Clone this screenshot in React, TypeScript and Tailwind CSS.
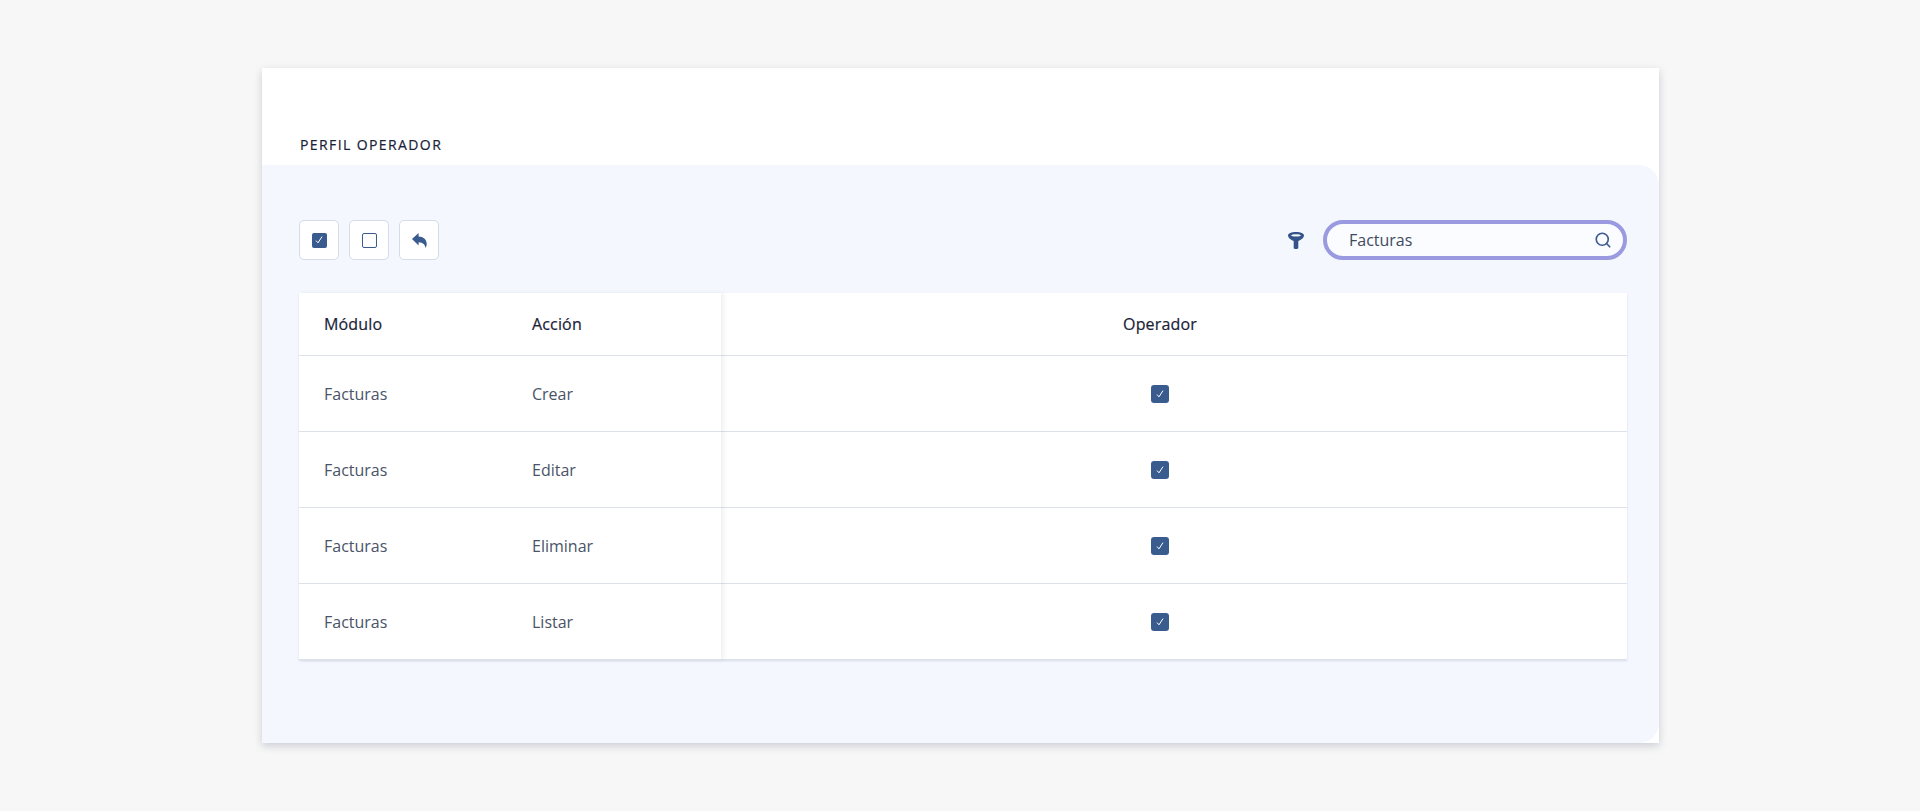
import React from "react";
import { Search } from "lucide-react";

const rows = ["Crear", "Editar", "Eliminar", "Listar"];

function Check({ size }: { size: "sm" | "lg" }) {
  return (
    <span className={`flex items-center justify-center bg-[#3a5b8e] ${size === "lg" ? "w-[18px] h-[18px] rounded-[3px]" : "w-[15px] h-[15px] rounded-[2px]"}`}>
      <svg width="10" height="10" viewBox="0 0 10 10" fill="none" stroke="#ffffff" strokeWidth="1">
        <path d="M2 5.6 L4 7.8 L8 1.6" />
      </svg>
    </span>
  );
}

function ToolButton({ children }: { children: React.ReactNode }) {
  return (
    <button className="w-10 h-10 flex items-center justify-center bg-white border border-[#d5dbe8] rounded-[5px]">
      {children}
    </button>
  );
}

export default function App() {
  return (
    <div className="min-h-[811px] bg-[#f7f7f7] pt-[68px] pl-[262px] font-['Open_Sans','Noto_Sans',sans-serif]">
      <div className="w-[1397px] h-[675px] bg-white flex flex-col shadow-[0_3px_8px_rgba(50,60,90,0.22)]">
        <div className="h-[97px] shrink-0 flex items-end pl-[38px] pb-[10px]">
          <h1 className="text-[14px] leading-[20px] font-medium tracking-[0.1em] text-[#1a2238] [-webkit-text-stroke:0.2px_#1a2238]">PERFIL OPERADOR</h1>
        </div>
        <div className="flex-1 bg-[#f4f7fe] rounded-tr-[20px] rounded-br-[20px] pl-[37px] pr-[32px] pt-[55px]">
          <div className="flex items-center justify-between h-10">
            <div className="flex gap-[10px]">
              <ToolButton><Check size="sm" /></ToolButton>
              <ToolButton><span className="w-[15px] h-[15px] border border-[#3a5b8e] rounded-[2px] bg-white" /></ToolButton>
              <ToolButton>
                <svg width="15" height="15" viewBox="0 0 15 15" className="text-[#3a5b8e]">
                  <path fill="currentColor" d="M0 6L6.6 0V3.6C11.2 3.8 14.6 6.2 14.7 10.8C14.8 12.4 14.3 13.8 13.6 15C13.2 12 11.4 9.4 6.6 9.2V12.4L0 6Z" />
                </svg>
              </ToolButton>
            </div>
            <div className="flex items-center gap-[19px]">
              <svg width="16" height="17" viewBox="0 0 16 17" className="text-[#33548a]">
                <path fill="currentColor" fillRule="evenodd" d="M8 0C3.4 0 0 1.4 0 3.4C0 5.5 2.8 7.8 5.7 9V15.8C5.7 16.5 6.2 17 6.9 17H9.1C9.8 17 10.3 16.5 10.3 15.8V9C13.2 7.8 16 5.5 16 3.4C16 1.4 12.6 0 8 0ZM8 2.2C10.6 2.2 12.8 2.7 12.8 3.4C12.8 4.1 10.6 4.6 8 4.6C5.4 4.6 3.2 4.1 3.2 3.4C3.2 2.7 5.4 2.2 8 2.2Z" />
              </svg>
              <div className="w-[304px] h-10 rounded-full border-4 border-[#9a9ae0] bg-[#fbfcff] flex items-center pl-[22px] pr-[11px]">
                <span className="flex-1 text-[16px] text-[#3f4a60]">Facturas</span>
                <Search className="w-[18px] h-[18px] text-[#3a5b8e]" strokeWidth={2.2} />
              </div>
            </div>
          </div>

          <div className="mt-[33px] flex bg-white shadow-[0_1px_2px_rgba(60,70,100,0.15)]">
            <div className="w-[422px] shrink-0 relative z-10 bg-white shadow-[3px_0_4px_rgba(60,70,100,0.07)]">
              <div className="h-[63px] flex items-center border-b border-[#dde2ea] text-[16px] font-medium tracking-[0.01em] text-[#1a2238] [-webkit-text-stroke:0.2px_#1a2238]">
                <span className="w-[233px] pl-[25px]">Módulo</span>
                <span>Acción</span>
              </div>
              {rows.map((r) => (
                <div key={r} className="h-[76px] flex items-center border-b border-[#dde2ea] text-[16px] text-[#4a5368]">
                  <span className="w-[233px] pl-[25px]">Facturas</span>
                  <span>{r}</span>
                </div>
              ))}
            </div>
            <div className="flex-1">
              <div className="h-[63px] flex items-center justify-center pr-[28px] border-b border-[#dde2ea] text-[16px] font-medium tracking-[0.01em] text-[#1a2238] [-webkit-text-stroke:0.2px_#1a2238]">Operador</div>
              {rows.map((r) => (
                <div key={r} className="h-[76px] flex items-center justify-center pr-[28px] border-b border-[#dde2ea]">
                  <Check size="lg" />
                </div>
              ))}
            </div>
          </div>
        </div>
      </div>
    </div>
  );
}
